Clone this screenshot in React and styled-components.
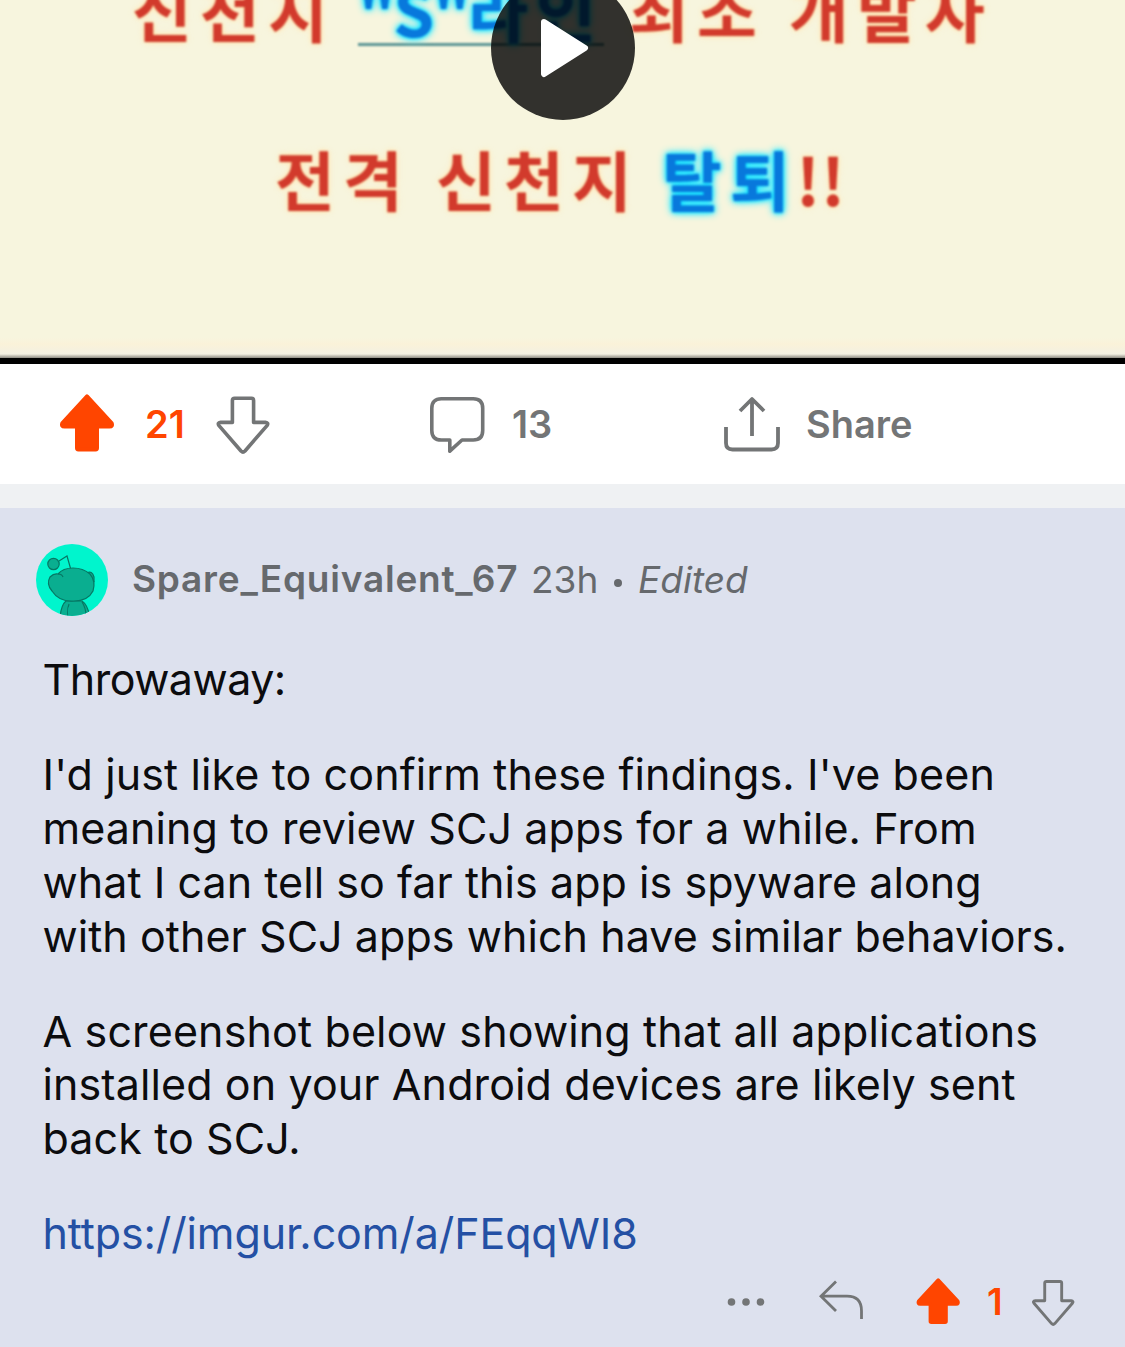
import React from "react";
import styled, { createGlobalStyle } from "styled-components";

const Global = createGlobalStyle`
  *{box-sizing:border-box}
  body{margin:0;background:#dde1ee;font-family:Inter,"Liberation Sans",sans-serif}
`;
const Page = styled.main`width:1125px;height:1347px;overflow:hidden;display:flex;flex-direction:column;background:#dde1ee;`;
const Video = styled.section`
  position:relative;height:364px;flex:none;overflow:hidden;border-bottom:6px solid #000;
  background:linear-gradient(#f7f5de 0,#f7f5de 338px,#faf2d9 344px,#f3f0e2 354px,#8d8b83 358px);
`;
const Caption = styled.div`
  display:flex;height:96px;line-height:96px;align-items:center;white-space:pre;
  margin-top:${p => p.$top}px;padding-left:${p => p.$left}px;
  font-family:"Noto Sans CJK KR",sans-serif;font-weight:700;font-size:65px;letter-spacing:8.2px;
  filter:blur(1px);
`;
const Word = styled.span`
  width:${p => p.$w}px;flex:none;margin-left:${p => p.$ml || 0}px;
  letter-spacing:${p => (p.$ls === undefined ? 8.2 : p.$ls)}px;
  color:${p => (p.$blue ? "#0878dc" : "#d23a2c")};
  text-shadow:${p => (p.$blue ? "0 0 3px #00d8ff,0 0 5px #10e4ff,0 0 8px #40eaff,0 0 9px #60eaff" : "0 0 4px #ffdf98,0 0 8px #ffeccb")};
`;
const Underlined = styled.span`display:flex;height:74px;line-height:74px;width:${p => p.$w}px;border-bottom:3px solid #5c9494;`;
const Play = styled.button`
  position:absolute;left:491px;top:-24px;width:144px;height:144px;border:0;border-radius:50%;padding:0;
  background:rgba(0,0,0,.8);display:grid;place-items:center;
`;
const Actions = styled.nav`height:120px;flex:none;background:#fff;display:flex;align-items:center;padding-left:58px;`;
const Group = styled.div`display:flex;align-items:center;width:${p => p.$w}px;`;
const Count = styled.span`
  font-weight:600;font-size:${p => p.$size || 38}px;line-height:48px;
  color:${p => (p.$on ? "#ff4500" : "#737576")};width:${p => p.$w}px;margin-left:${p => p.$ml || 0}px;
`;
const Band = styled.div`height:24px;flex:none;background:#eff1f3;`;
const Comment = styled.article`flex:1;padding:36px 36px 0;display:flex;flex-direction:column;`;
const Header = styled.header`display:flex;align-items:center;height:72px;color:#66696d;font-size:37px;line-height:44px;white-space:pre;`;
const User = styled.span`font-weight:600;margin-left:24px;width:399px;padding-bottom:2px;letter-spacing:.78px;`;
const Age = styled.span`width:80px;padding-bottom:1px;`;
const Dot = styled.span`width:8px;height:8px;border-radius:50%;background:#66696d;margin:5px 16px 0 3px;`;
const Edited = styled.em`padding-bottom:1px;`;
const Body = styled.div`padding:37px 0 0 6.5px;color:#0c0c0e;font-size:43px;line-height:53.9px;display:flex;flex-direction:column;gap:41px;`;
const Para = styled.p`margin:0;`;
const Line = styled.span`display:block;width:max-content;white-space:pre;letter-spacing:${p => p.$ls || 0}px;`;
const Link = styled.a`color:#2450a4;text-decoration:none;`;
const Tools = styled.footer`display:flex;align-items:center;height:60px;margin-top:11px;padding-left:690px;`;

const Up = ({ size }) => (
  <svg width={size} height={size} viewBox="0 0 60 60">
    <path d="M29 2.4 L53.6 29 Q55 32.6 51.5 32.6 H39 V54 Q39 55.4 37.6 55.4 H20.4 Q19 55.4 19 54 V32.6 H6.5 Q3 32.6 4.4 29 Z" fill="#ff4500" stroke="#ff4500" strokeWidth="4" strokeLinejoin="round" />
  </svg>
);
const Down = ({ size, sw }) => (
  <svg width={size} height={size} viewBox="0 0 60 60" fill="none" stroke="#737576" strokeWidth={sw} strokeLinejoin="round">
    <path d="M20.5 4.3 H37.5 Q39.6 4.3 39.6 6.4 V28.4 H51.4 Q55 28.8 53 31.6 L31 57 Q29 59 27 57 L5 31.6 Q3 28.8 6.6 28.4 H18.4 V6.4 Q18.4 4.3 20.5 4.3 Z" />
  </svg>
);
const Bubble = () => (
  <svg width="60" height="60" viewBox="0 0 60 60" fill="none" stroke="#737576" strokeWidth="3.6">
    <path d="M14.3 4.8 H46.2 Q55.7 4.8 55.7 14.3 V36.5 Q55.7 46 46.2 46 H35 L22.8 57.2 V46 H14.3 Q4.8 46 4.8 36.5 V14.3 Q4.8 4.8 14.3 4.8 Z" strokeLinejoin="round" />
  </svg>
);
const Share = () => (
  <svg width="60" height="60" viewBox="0 0 60 60" fill="none" stroke="#737576" strokeWidth="3.8">
    <path d="M30 42 V5 M18 17 L30 5 L42 17 M4 33 V49 Q4 55.5 10.5 55.5 H49.5 Q56 55.5 56 49 V33" strokeLinejoin="round" />
  </svg>
);
const Reply = () => (
  <svg width="50" height="50" viewBox="0 0 50 50" fill="none" stroke="#737576" strokeWidth="2.8">
    <path d="M20 4.5 L5 19.2 L20 34 M5 19.2 H31 Q45.5 19.2 45.5 34 V42" />
  </svg>
);
const More = () => (
  <svg width="40" height="10" viewBox="0 0 40 10" fill="#737576">
    <circle cx="5.5" cy="5" r="3.8" /><circle cx="20" cy="5" r="3.8" /><circle cx="34.5" cy="5" r="3.8" />
  </svg>
);
const Avatar = () => (
  <svg width="72" height="72" viewBox="0 0 72 72">
    <defs><clipPath id="avatar"><circle cx="36" cy="36" r="36" /></clipPath></defs>
    <g clipPath="url(#avatar)" fill="#0aae90" stroke="#067864" strokeWidth="1.2">
      <path d="M0 0H72V72H0Z" fill="#00f5cd" stroke="none" />
      <path d="M23 17 L31 12 L35 26" fill="none" />
      <circle cx="17.5" cy="20" r="5.7" />
      <path d="M24 74 Q25 61 30 57 H46 Q52 61 54 74 Z M33 60 Q31 65 32 74 M46 58 Q50 64 50 72" />
      <path d="M51 29 Q56 26 58 33 V38" />
      <path d="M16 47 Q10 40 14 33 Q18 29 22 30 Q27 24 37 24 Q47 24 54 30 Q60 37 57 47 Q52 57 38 57 Q23 58 16 47 Z" />
      <path d="M22 30 Q26 30 27 33" fill="none" />
    </g>
  </svg>
);

export default function App() {
  return (
    <Page>
      <Global />
      <Video>
        <Caption $top={-39} $left={132}>
          <Word $w={226}>신천지</Word>
          <Underlined $w={246}>
            <Word $blue $ls={-1} $w={110}>"S"</Word>
            <Word $blue $w={136}>라인</Word>
          </Underlined>
          <Word $w={160} $ml={25}>최조</Word>
          <Word $w={210}>개발자</Word>
        </Caption>
        <Caption $top={73} $left={275}>
          <Word $w={161}>전격</Word>
          <Word $w={226}>신천지</Word>
          <Word $blue $w={134}>탈퇴</Word>
          <Word $w={60} $ls={1}>!!</Word>
        </Caption>
        <Play aria-label="Play">
          <svg width="60" height="64" viewBox="0 0 60 64"><path d="M11 6 L52 32 L11 58 Z" fill="#fff" stroke="#fff" strokeWidth="6" strokeLinejoin="round" /></svg>
        </Play>
      </Video>
      <Actions>
        <Group $w={369}><Up size={60} /><Count $on $ml={27} $w={69}>21</Count><Down size={60} sw={3.6} /></Group>
        <Group $w={295}><Bubble /><Count $ml={25} $w={50}>13</Count></Group>
        <Group $w={300}><Share /><Count $ml={24} $w={120}>Share</Count></Group>
      </Actions>
      <Band />
      <Comment>
        <Header>
          <Avatar /><User>Spare_Equivalent_67</User><Age>23h</Age><Dot /><Edited>Edited</Edited>
        </Header>
        <Body>
          <Para><Line $ls={-0.5}>Throwaway:</Line></Para>
          <Para>
            <Line $ls={0.12}>I'd just like to confirm these findings. I've been</Line>
            <Line $ls={0.08}>meaning to review SCJ apps for a while. From</Line>
            <Line $ls={0.06}>what I can tell so far this app is spyware along</Line>
            <Line $ls={0.06}>with other SCJ apps which have similar behaviors.</Line>
          </Para>
          <Para>
            <Line $ls={0.14}>A screenshot below showing that all applications</Line>
            <Line $ls={0.11}>installed on your Android devices are likely sent</Line>
            <Line $ls={0.1}>back to SCJ.</Line>
          </Para>
          <Para><Line $ls={-0.11}><Link>https://imgur.com/a/FEqqWI8</Link></Line></Para>
        </Body>
        <Tools>
          <Group $w={90}><More /></Group>
          <Group $w={99}><Reply /></Group>
          <Up size={48} /><Count $on $size={37} $ml={24} $w={43}>1</Count><Down size={48} sw={3.6} />
        </Tools>
      </Comment>
    </Page>
  );
}
